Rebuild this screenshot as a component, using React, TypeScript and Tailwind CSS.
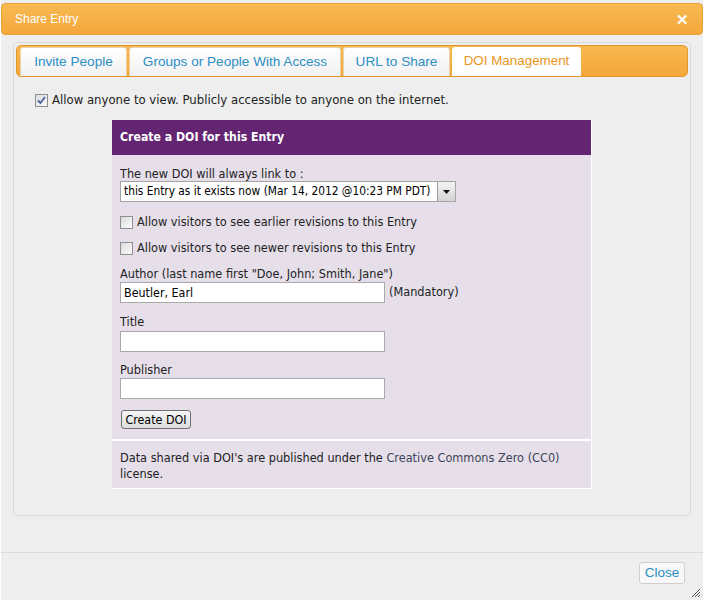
import React from 'react';

const tahoma = { fontFamily: '"DejaVu Sans Condensed", "DejaVu Sans", sans-serif' };

const Check = ({ checked }: { checked?: boolean }) => (
    <span className="inline-flex w-[13px] h-[13px] shrink-0 items-center justify-center border border-[#8e8f8f] bg-gradient-to-br from-[#dcdcdc] to-[#fbfbfb]">
        {checked && (
            <svg width="9" height="9" viewBox="0 0 9 9">
                <path d="M1 4.5 L3.5 7 L8 1" fill="none" stroke="#4a5fa0" strokeWidth="1.8" />
            </svg>
        )}
    </span>
);

const TextBox = ({ value }: { value?: string }) => (
    <div className="w-[265px] h-[21px] bg-white border border-[#a9a9a9] px-[3px] text-[12.4px] leading-[19px] text-black">
        {value}
    </div>
);

const tabs = [
    { label: 'Invite People', w: 'w-[107px]' },
    { label: 'Groups or People With Access', w: 'w-[212px]' },
    { label: 'URL to Share', w: 'w-[107px]' },
    { label: 'DOI Management', w: 'w-[129px]' },
];

export default function App() {
    return (
        <div className="w-[704px] h-[603px] bg-white overflow-hidden">
            <div className="h-[600px] mx-[1px] pt-[3px] flex flex-col bg-[#eeeeee]" style={{ fontFamily: '"Liberation Sans", Arial, sans-serif' }}>
                <div className="h-[32px] flex items-center justify-between px-[13px] rounded-[4px] border border-[#eba23c] bg-gradient-to-b from-[#f8ba52] to-[#f4a73a] text-white text-[12px]">
                    <span>Share Entry</span>
                    <span className="text-[15px] font-bold leading-none">✕</span>
                </div>

                <div className="mx-[12px] mt-[7px] h-[474px] rounded-[4px] border border-[#dadada] p-[2px] bg-[#eeeeee]">
                    <div className="h-[32px] rounded-[5px] border border-[#e3962c] bg-gradient-to-b from-[#f8b94f] to-[#f3a73a] flex items-end gap-[2px] pl-[3px]">
                        {tabs.map((t, i) => (
                            <div
                                key={t.label}
                                className={
                                    i === 3
                                        ? `${t.w} h-[29px] flex items-center justify-center whitespace-nowrap rounded-t-[3px] bg-white text-[#ea961c] text-[13.4px]`
                                        : `${t.w} h-[29px] flex items-center justify-center whitespace-nowrap rounded-t-[3px] border border-b-0 border-[#e9d3ad] bg-gradient-to-b from-[#ffffff] to-[#f1f1f1] text-[#2c8ec3] text-[13.6px]`
                                }
                            >
                                {t.label}
                            </div>
                        ))}
                    </div>

                    <div style={tahoma} className="text-[12.6px] text-[#222]">
                        <div className="flex items-center gap-[4px] mt-[15px] ml-[19px] h-[16px] text-[13px]">
                            <Check checked />
                            <span>Allow anyone to view. Publicly accessible to anyone on the internet.</span>
                        </div>

                        <div className="w-[480px] mx-auto mt-[12px] border-r border-b border-white">
                            <div className="h-[35px] bg-[#632572] flex items-center px-[8px] text-white text-[12.2px] font-bold">
                                Create a DOI for this Entry
                            </div>
                            <div className="bg-[#e6dfea] px-[8px] pt-[11px] pb-[9px] border-b-2 border-white">
                                <div className="leading-[15px]">The new DOI will always link to :</div>
                                <div className="flex w-[336px] h-[21px] border border-[#a5a5a5] bg-white">
                                    <div className="flex-1 px-[3px] leading-[19px] text-black text-[11.8px] whitespace-nowrap overflow-hidden">this Entry as it exists now (Mar 14, 2012 @10:23 PM PDT)</div>
                                    <div className="w-[18px] shrink-0 border-l border-[#9a9a9a] bg-gradient-to-b from-[#f4f4f4] to-[#d4d4d4] flex items-center justify-center">
                                        <svg width="7" height="4" viewBox="0 0 7 4"><path d="M0 0 H7 L3.5 4 Z" fill="#111" /></svg>
                                    </div>
                                </div>
                                <div className="flex items-center gap-[4px] mt-[12px] h-[16px]">
                                    <Check />
                                    <span>Allow visitors to see earlier revisions to this Entry</span>
                                </div>
                                <div className="flex items-center gap-[4px] mt-[10px] h-[16px]">
                                    <Check />
                                    <span>Allow visitors to see newer revisions to this Entry</span>
                                </div>
                                <div className="mt-[10px] leading-[16px]">Author (last name first "Doe, John; Smith, Jane")</div>
                                <div className="flex items-center gap-[4px]">
                                    <TextBox value="Beutler, Earl" />
                                    <span>(Mandatory)</span>
                                </div>
                                <div className="mt-[11px] leading-[16px]">Title</div>
                                <div className="mt-[1px]"><TextBox /></div>
                                <div className="mt-[10px] leading-[16px]">Publisher</div>
                                <TextBox />
                                <button className="mt-[11px] ml-[1px] h-[19px] w-[70px] rounded-[3px] border border-[#707070] bg-gradient-to-b from-[#f6f6f6] to-[#dcdcdc] text-[12.4px] leading-[17px] text-black">
                                    Create DOI
                                </button>
                            </div>
                            <div className="bg-[#e6dfea] px-[8px] pt-[9px] pb-[6px] leading-[16px]">
                                Data shared via DOI's are published under the <span className="text-[#3b4458]">Creative Commons Zero (CC0)</span> license.
                            </div>
                        </div>
                    </div>
                </div>

                <div className="mt-[36px] flex-1 border-t border-[#dcdcdc] relative">
                    <div className="flex justify-end pr-[18px] pt-[9px]">
                        <div className="w-[46px] h-[22px] rounded-[3px] border border-[#cfcfcf] bg-[#f8f8f8] flex items-center justify-center text-[13.5px] text-[#2c8ec3]">
                            Close
                        </div>
                    </div>
                    <svg className="absolute right-[2px] bottom-[2px]" width="10" height="10" viewBox="0 0 10 10">
                        <path d="M9 1 L1 9 M9 4 L4 9 M9 7 L7 9" stroke="#555" strokeWidth="1" />
                    </svg>
                </div>
            </div>
        </div>
    );
}
